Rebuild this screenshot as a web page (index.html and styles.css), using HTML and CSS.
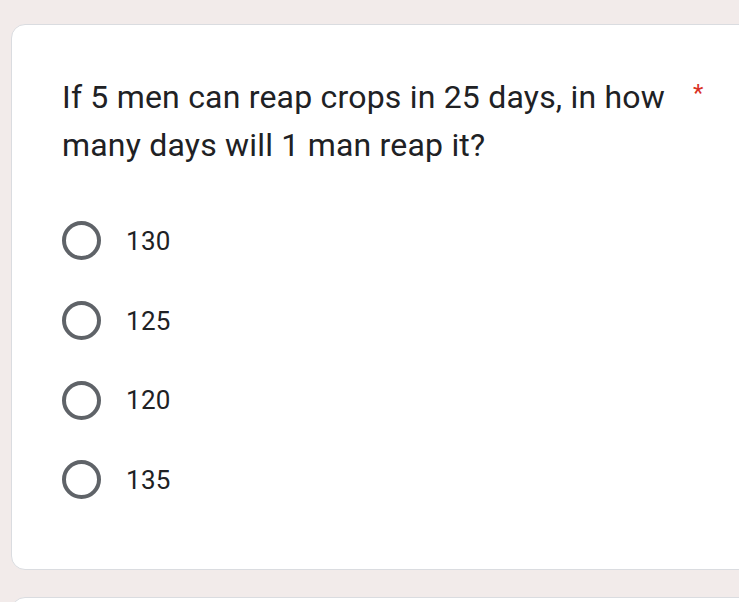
FILE: index.html
```html
<!DOCTYPE html>
<html>
<head>
<meta charset="utf-8">
<link rel="stylesheet" href="styles.css">
</head>
<body>
<div class="page">
  <div class="card">
    <div class="title-row">
      <div class="title">If 5 men can reap crops in 25 days, in how many days will 1 man reap it?</div>
      <span class="req">*</span>
    </div>
    <div class="options">
      <label class="option"><span class="radio"></span><span class="opt-text">130</span></label>
      <label class="option"><span class="radio"></span><span class="opt-text">125</span></label>
      <label class="option"><span class="radio"></span><span class="opt-text">120</span></label>
      <label class="option"><span class="radio"></span><span class="opt-text">135</span></label>
    </div>
  </div>
  <div class="card next"></div>
</div>
</body>
</html>
```
FILE: styles.css
```css
html, body {
  margin: 0;
  padding: 0;
  background: #f2ebea;
  overflow: hidden;
  height: 602px;
}
.page {
  padding: 24px 0 0 11px;
  display: flex;
  flex-direction: column;
  gap: 27px;
}
.card {
  width: 780px;
  box-sizing: border-box;
  background: #fff;
  border: 1px solid #dadce0;
  border-radius: 14px;
  padding: 48px 0 49px 50px;
  font-family: Roboto, "Liberation Sans", sans-serif;
}
.card.next {
  height: 60px;
  padding: 0;
}
.title-row {
  display: flex;
  align-items: flex-start;
}
.title {
  width: 612px;
  font-size: 32px;
  line-height: 48px;
  color: #202124;
  letter-spacing: 0.2px;
}
.req {
  color: #d93025;
  font-size: 24px;
  line-height: 24px;
  margin-left: 19px;
  margin-top: 8px;
}
.options {
  margin-top: 32px;
  display: flex;
  flex-direction: column;
}
.option {
  height: 79.7px;
  display: flex;
  align-items: center;
  gap: 25px;
}
.radio {
  width: 39px;
  height: 39px;
  box-sizing: border-box;
  border: 4px solid #5f6368;
  border-radius: 50%;
  flex: none;
}
.opt-text {
  font-size: 26px;
  color: #202124;
  letter-spacing: 0.3px;
}
```
